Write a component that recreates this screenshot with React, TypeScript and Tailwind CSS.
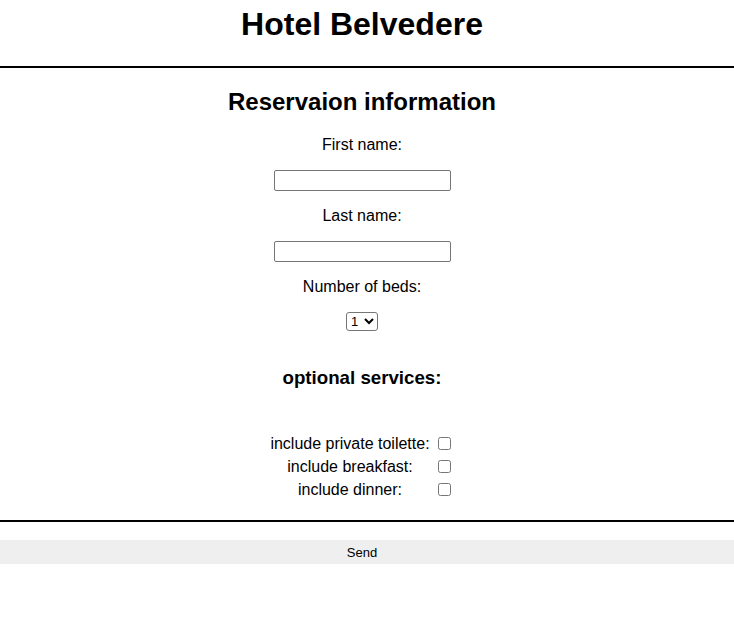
export default function App() {
  return (
    <div className="font-['Liberation_Sans',Arial,sans-serif] text-black bg-white min-h-[639px]">
      <div className="pr-[10px] pt-[6px]">
        <h1 className="h-[37px] text-[32px] leading-[37px] font-bold text-center">Hotel Belvedere</h1>
      </div>
      <div className="mt-[23px] h-[2px] bg-black" />
      <div className="pr-[10px] flex flex-col items-center">
        <h2 className="mt-[20px] h-[28px] text-[24px] leading-[28px] font-bold text-center">Reservaion information</h2>
        <label className="mt-[20px] h-[18px] text-[16px] leading-[18px]">First name:</label>
        <input type="text" className="mt-[16px] w-[177px] h-[21px] border border-[#767676] rounded-[2px] bg-white px-[2px] text-[13px]" />
        <label className="mt-[16px] h-[18px] text-[16px] leading-[18px]">Last name:</label>
        <input type="text" className="mt-[16px] w-[177px] h-[21px] border border-[#767676] rounded-[2px] bg-white px-[2px] text-[13px]" />
        <label className="mt-[16px] h-[18px] text-[16px] leading-[18px]">Number of beds:</label>
        <select defaultValue="1" className="mt-[16px] w-[32px] h-[19px] border border-[#767676] rounded-[3px] bg-white text-[13px] leading-[15px] font-['Liberation_Sans',Arial,sans-serif]">
          <option value="1">1</option>
          <option value="2">2</option>
          <option value="3">3</option>
        </select>
        <h3 className="mt-[36px] h-[22px] text-[18.72px] leading-[22px] font-bold">optional services:</h3>
        <div className="mt-[45px] mr-[3px] grid grid-cols-[auto_13px] gap-x-[8px] justify-center">
          <span className="h-[23px] text-[16px] leading-[18px] pt-[1px] text-center">include private toilette:</span>
          <div className="h-[23px] pt-[3px]"><input type="checkbox" className="w-[13px] h-[13px] m-0 block" /></div>
          <span className="h-[23px] text-[16px] leading-[18px] pt-[1px] text-center">include breakfast:</span>
          <div className="h-[23px] pt-[3px]"><input type="checkbox" className="w-[13px] h-[13px] m-0 block" /></div>
          <span className="h-[23px] text-[16px] leading-[18px] pt-[1px] text-center">include dinner:</span>
          <div className="h-[23px] pt-[3px]"><input type="checkbox" className="w-[13px] h-[13px] m-0 block" /></div>
        </div>
      </div>
      <div className="mt-[17px] h-[2px] bg-black" />
      <button type="button" className="mt-[18px] w-full h-[24px] bg-[#efefef] pr-[10px] text-[13px] leading-[15px] text-black">Send</button>
    </div>
  );
}
